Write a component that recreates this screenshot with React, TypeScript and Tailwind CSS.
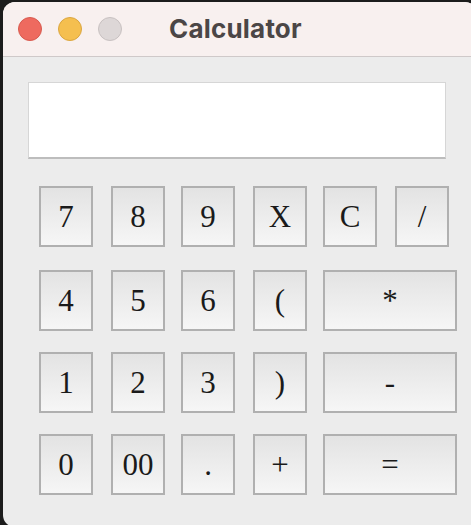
import React from "react";

const serif = { fontFamily: '"Liberation Serif", "Times New Roman", serif' };

function Key({ label, wide = false, ml = 0 }: { label: string; wide?: boolean; ml?: number }) {
  const mlClass =
    ml === 18 ? "ml-[18px]" : ml === 16 ? "ml-[16px]" : "";
  return (
    <div
      className={`${wide ? "w-[134px]" : "w-[54px]"} ${mlClass} h-[61px] border-2 border-[#b0b0b0] bg-gradient-to-b from-[#e3e3e3] to-[#f6f6f6] flex items-center justify-center text-[31px] text-[#1a1a1a] leading-none`}
      style={serif}
    >
      {label}
    </div>
  );
}

export default function App() {
  return (
    <div className="w-[471px] h-[525px] bg-[#1c1c1c] overflow-hidden">
      <div className="ml-[3px] mt-[2px] w-[474px] h-[525px] rounded-[12px] overflow-hidden bg-[#ececec]">
        <div className="h-[55px] bg-[#f8f0ef] border-b border-[#cfc9c9] flex items-center pl-[15px]">
          <div className="w-6 h-6 rounded-full bg-[#ee6a5f] border border-[#d85a4f]" />
          <div className="w-6 h-6 rounded-full bg-[#f5bf4f] border border-[#dba640] ml-4" />
          <div className="w-6 h-6 rounded-full bg-[#ddd7d7] border border-[#c8c1c1] ml-4" />
          <div
            className="ml-[47px] text-[26px] font-bold text-[#4b4646] leading-none tracking-[0.2px]"
            style={{ fontFamily: 'Inter, "Liberation Sans", sans-serif' }}
          >
            Calculator
          </div>
        </div>
        <div className="mt-[25px] ml-[25px] w-[418px] h-[77px] bg-white border border-[#d6d6d6] border-b-2 border-b-[#bdbdbd]" />
        <div className="pl-[36px] mt-[27px] flex flex-col">
          <div className="flex">
            <Key label="7" />
            <Key label="8" ml={18} />
            <Key label="9" ml={16} />
            <Key label="X" ml={18} />
            <Key label="C" ml={16} />
            <Key label="/" ml={18} />
          </div>
          <div className="flex mt-[23px]">
            <Key label="4" />
            <Key label="5" ml={18} />
            <Key label="6" ml={16} />
            <Key label="(" ml={18} />
            <Key label="*" wide ml={16} />
          </div>
          <div className="flex mt-[21px]">
            <Key label="1" />
            <Key label="2" ml={18} />
            <Key label="3" ml={16} />
            <Key label=")" ml={18} />
            <Key label="-" wide ml={16} />
          </div>
          <div className="flex mt-[21px]">
            <Key label="0" />
            <Key label="00" ml={18} />
            <Key label="." ml={16} />
            <Key label="+" ml={18} />
            <Key label="=" wide ml={16} />
          </div>
        </div>
      </div>
    </div>
  );
}
